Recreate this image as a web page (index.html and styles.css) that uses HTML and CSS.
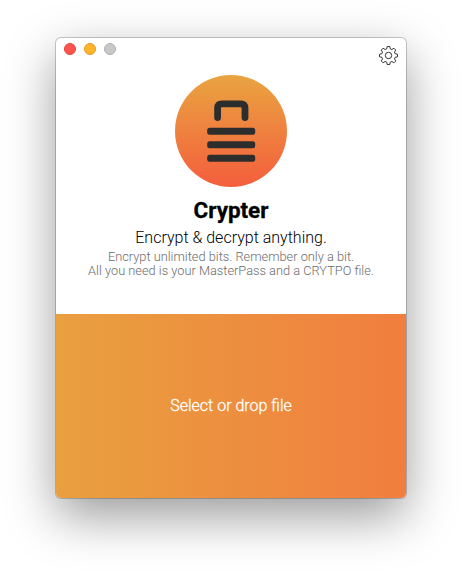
FILE: index.html
```html
<!DOCTYPE html>
<html lang="en">
<head>
<meta charset="utf-8">
<title>Crypter</title>
<link rel="stylesheet" href="styles.css">
</head>
<body>
<main class="window">
  <header class="titlebar">
    <div class="controls">
      <span class="dot dot-close"></span>
      <span class="dot dot-minimize"></span>
      <span class="dot dot-zoom"></span>
    </div>
    <svg class="gear" viewBox="-9.5 -9.5 19 19" fill="none" stroke="#333" stroke-width="1" stroke-linejoin="round">
      <path d="M-1.3-9H1.3L1.8-6.6 3.4-6 5.4-7.3 7.3-5.4 6-3.4 6.6-1.8 9-1.3V1.3L6.6 1.8 6 3.4 7.3 5.4 5.4 7.3 3.4 6 1.8 6.6 1.3 9H-1.3L-1.8 6.6-3.4 6-5.4 7.3-7.3 5.4-6 3.4-6.6 1.8-9 1.3V-1.3L-6.6-1.8-6-3.4-7.3-5.4-5.4-7.3-3.4-6-1.8-6.6Z"/>
      <circle r="3.2"/>
    </svg>
  </header>
  <section class="intro">
    <svg class="logo" viewBox="0 0 112 112">
      <defs>
        <linearGradient id="glow" x1="0" y1="0" x2="0" y2="1">
          <stop offset="0" stop-color="#e9a440"/>
          <stop offset="1" stop-color="#f45e3d"/>
        </linearGradient>
      </defs>
      <circle cx="56" cy="56" r="56" fill="url(#glow)"/>
      <path d="M42.6 42.6V33Q42.6 28.8 46.8 28.8H65.8Q70 28.8 70 33V42.6" fill="none" stroke="#2d2d2d" stroke-width="6.8" stroke-linecap="round"/>
      <g fill="#2d2d2d">
        <rect x="32.2" y="52.8" width="48" height="7" rx="2.5"/>
        <rect x="32.2" y="66.3" width="48" height="7" rx="2.5"/>
        <rect x="32.2" y="79.8" width="48" height="7" rx="2.5"/>
      </g>
    </svg>
    <h1 class="title">Crypter</h1>
    <p class="tagline">Encrypt &amp; decrypt anything.</p>
    <p class="details">Encrypt unlimited bits. Remember only a bit.<br>All you need is your MasterPass and a CRYTPO file.</p>
  </section>
  <section class="dropzone">Select or drop file</section>
</main>
</body>
</html>
```
FILE: styles.css
```css
* { box-sizing: border-box; }
body {
  margin: 0;
  height: 572px;
  padding: 38px 56px 0;
  background: #fff;
  overflow: hidden;
  font-family: Roboto, "Liberation Sans", sans-serif;
}
.window {
  width: 350px;
  height: 460px;
  display: flex;
  flex-direction: column;
  border-radius: 5px;
  background: #fff;
  box-shadow: 0 0 0 1px rgba(0, 0, 0, .2), 0 18px 50px rgba(0, 0, 0, .4);
}
.titlebar {
  height: 37px;
  display: flex;
  justify-content: space-between;
  padding: 5px 8px 0 8px;
}
.controls { display: flex; gap: 8px; }
.dot {
  width: 12px;
  height: 12px;
  border-radius: 50%;
  border: 1px solid;
}
.dot-close { background: #ff544d; border-color: #e2443f; }
.dot-minimize { background: #ffb429; border-color: #e09c22; }
.dot-zoom { background: #c8c8c8; border-color: #b1b1b1; }
.gear { width: 19px; height: 19px; margin-top: 3px; }
.intro {
  height: 239px;
  display: flex;
  flex-direction: column;
  align-items: center;
  text-align: center;
}
.logo { width: 112px; height: 112px; flex: none; }
.title {
  margin: 10px 0 0;
  font-size: 22.4px;
  line-height: 26px;
  font-weight: 700;
  color: #000;
  -webkit-text-stroke: .3px #000;
}
.tagline {
  margin: 5px 0 0;
  font-size: 16px;
  line-height: 20px;
  font-weight: 300;
  color: #000;
}
.details {
  margin: 2px 0 0;
  font-size: 12.8px;
  line-height: 14px;
  font-weight: 300;
  color: #6c6c6c;
  white-space: nowrap;
}
.dropzone {
  flex: 1;
  display: flex;
  align-items: center;
  justify-content: center;
  padding-bottom: 2px;
  border-radius: 0 0 5px 5px;
  background: linear-gradient(90deg, #e9a03f, #f17e3f);
  color: #fff;
  font-size: 16px;
  font-weight: 300;
  -webkit-text-stroke: .3px #fff;
}
```
